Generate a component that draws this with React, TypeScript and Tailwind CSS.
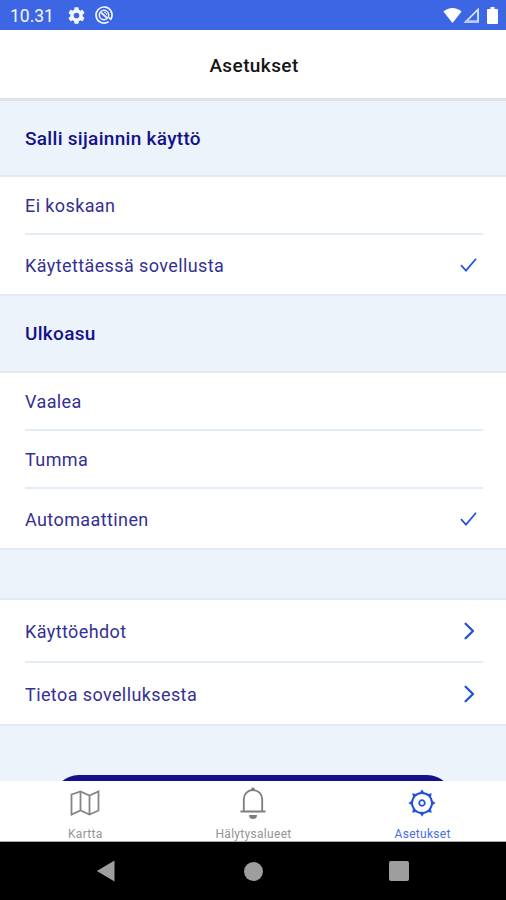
import React from "react";

function SectionTitle({ children, className }: { children: React.ReactNode; className: string }) {
  return (
    <h2 className={`flex shrink-0 items-center border-b-2 border-[#e3eaf3] bg-[#edf3fb] pl-[25px] text-[19px] font-medium tracking-[0.3px] text-[#14128a] ${className}`}>
      {children}
    </h2>
  );
}

function Row({ label, className, icon, last }: { label: string; className: string; icon?: "check" | "chevron"; last?: boolean }) {
  return (
    <div className={`ml-[25px] mr-[23px] flex shrink-0 items-center justify-between text-[18px] tracking-[0.4px] text-[#343093] ${last ? "" : "border-b-2 border-[#e3ebf4]"} ${className}`}>
      <span className="pt-px">{label}</span>
      {icon === "check" && (
        <svg className="mr-[6px] h-[16px] w-[17px]" viewBox="0 0 17 16" fill="none" stroke="#2352dc" strokeWidth="1.7">
          <path d="M1 8.2 6 13.6 16 1.7" />
        </svg>
      )}
      {icon === "chevron" && (
        <svg className="mr-[8px] h-[18px] w-[11px]" viewBox="0 0 11 18" fill="none" stroke="#2451d4" strokeWidth="2.3" strokeLinecap="round" strokeLinejoin="round">
          <path d="M1.6 1.7 9 9 1.6 16.3" />
        </svg>
      )}
    </div>
  );
}

const teeth = [0, 45, 90, 135, 180, 225, 270, 315];

export default function App() {
  return (
    <div className="flex h-[900px] w-[506px] flex-col overflow-hidden bg-white font-[Roboto,sans-serif]">
      <div className="flex h-[30px] shrink-0 items-center bg-[#3c66e4] pl-[10px] pr-[8px] text-[#f4f7ff]">
        <span className="w-[58px] pt-[2px] text-[17.5px]">10.31</span>
        <svg className="h-[17px] w-[17px]" viewBox="2 2 20 20" fill="currentColor">
          <path d="M19.14 12.94c.04-.3.06-.61.06-.94 0-.32-.02-.64-.07-.94l2.03-1.58a.49.49 0 0 0 .12-.61l-1.92-3.32a.488.488 0 0 0-.59-.22l-2.39.96c-.5-.38-1.03-.7-1.62-.94l-.36-2.54a.484.484 0 0 0-.48-.41h-3.84c-.24 0-.43.17-.47.41l-.36 2.54c-.59.24-1.13.57-1.62.94l-2.39-.96c-.22-.08-.47 0-.59.22L2.74 8.87c-.12.21-.08.47.12.61l2.03 1.58c-.05.3-.09.63-.09.94s.02.64.07.94l-2.03 1.58a.49.49 0 0 0-.12.61l1.92 3.32c.12.22.37.29.59.22l2.39-.96c.5.38 1.03.7 1.62.94l.36 2.54c.05.24.24.41.48.41h3.84c.24 0 .44-.17.47-.41l.36-2.54c.59-.24 1.13-.56 1.62-.94l2.39.96c.22.08.47 0 .59-.22l1.92-3.32c.12-.22.07-.47-.12-.61l-2.01-1.58zM12 15.3a3.3 3.3 0 1 1 0-6.6 3.3 3.3 0 0 1 0 6.6z" />
        </svg>
        <svg className="ml-[10px] h-[18px] w-[18px]" viewBox="0 0 18 18" fill="none" stroke="currentColor">
          <path d="M13.6 15.6A8 8 0 1 1 15.8 13.300L14 11.700" strokeWidth="1.700" />
          <circle cx="9" cy="9" r="4.700" strokeWidth="1.500" />
          <path d="M6 6.500 12 12" strokeWidth="1.700" />
          <path d="M9 6.200a2.700 2.700 0 0 1 2.700 2.700" strokeWidth="1" />
        </svg>
        <svg className="ml-auto h-[17px] w-[19px]" viewBox="0 0 19 17" fill="#fff">
          <path d="M.4 4.600C5.700-.3 13.300-.3 18.600 4.600L9.500 16z" />
        </svg>
        <svg className="ml-[1px] h-[17px] w-[17px]" viewBox="0 0 17 17" fill="none">
          <path d="M2.500 15 15 2.500V15z" stroke="#e4ebff" strokeWidth="1.700" />
          <path d="M2.500 14.500H15" stroke="#b7c8fa" strokeWidth="2.600" />
        </svg>
        <svg className="ml-[7px] h-[17px] w-[11px]" viewBox="0 0 11 17" fill="#fff">
          <path d="M3.500 0h4v2H10a1 1 0 0 1 1 1v13a1 1 0 0 1-1 1H1a1 1 0 0 1-1-1V3a1 1 0 0 1 1-1h2.500z" />
        </svg>
      </div>

      <header className="flex h-[71px] shrink-0 items-center justify-center border-b-[3px] border-[#dde3ea] pl-[2px] pt-[5px] text-[19px] font-medium tracking-[0.4px] text-[#151515]">
        Asetukset
      </header>

      <SectionTitle className="h-[76px] pt-[2px]">Salli sijainnin käyttö</SectionTitle>
      <Row label="Ei koskaan" className="h-[58px]" />
      <Row label="Käytettäessä sovellusta" className="h-[59px]" icon="check" last />

      <SectionTitle className="h-[79px] border-t-2 pt-[2px]">Ulkoasu</SectionTitle>
      <Row label="Vaalea" className="h-[58px]" />
      <Row label="Tumma" className="h-[58px]" />
      <Row label="Automaattinen" className="h-[59px]" icon="check" last />

      <div className="h-[52px] shrink-0 border-y-2 border-[#e3eaf3] bg-[#edf3fb]" />
      <Row label="Käyttöehdot" className="h-[63px]" icon="chevron" />
      <Row label="Tietoa sovelluksesta" className="h-[61px]" icon="chevron" last />

      <div className="flex h-[57px] shrink-0 justify-center overflow-hidden border-t-2 border-[#e3eaf3] bg-[#edf3fb] pt-[49px]">
        <button className="h-[56px] w-[400px] shrink-0 rounded-[26px] bg-[#12108a]" />
      </div>

      <nav className="grid h-[61px] shrink-0 grid-cols-3 border-b border-[#aaa] text-[12px] tracking-[0.3px] text-[#949494]">
        <div className="flex flex-col items-center pl-[2px] pt-[8px]">
          <svg className="h-[28px] w-[30px]" viewBox="0 0 30 28" fill="none" stroke="#858585" strokeWidth="1.800">
            <path d="M1.500 5.500 10.500 2.500 19.500 6.500 28.500 2.500V21.500L19.500 25.500 10.500 21.500 1.500 25.500zM10.500 2.500v19M19.500 6.500v19" />
          </svg>
          <span className="mt-[10px] leading-[14px]">Kartta</span>
        </div>
        <div className="flex flex-col items-center pt-[6px]">
          <svg className="h-[32px] w-[28px]" viewBox="0 0 28 32" fill="none" stroke="#7d7d7d" strokeWidth="1.800">
            <path d="M1.500 24.500h25M4.800 24.500V12.200a9.200 9.200 0 0 1 18.400 0v12.300" />
            <path d="M12 3.400V2.500a2 2 0 0 1 4 0v.9zM10 28h8a4 4 0 0 1-8 0z" fill="#7d7d7d" stroke="none" />
          </svg>
          <span className="mt-[8px] pl-px leading-[14px]">Hälytysalueet</span>
        </div>
        <div className="flex flex-col items-center pt-[7px] text-[#4a6ce2]">
          <svg className="h-[30px] w-[30px]" viewBox="-15 -15 30 30" fill="none" stroke="#2151da">
            <circle r="10" strokeWidth="1.900" />
            <circle r="2.800" strokeWidth="1.800" />
            {teeth.map((a) => (
              <path key={a} d="M-2-10.300 0-13.300 2-10.300z" transform={`rotate(${a})`} fill="#2151da" strokeWidth=".4" />
            ))}
          </svg>
          <span className="mt-[9px] pl-[2px] leading-[14px]">Asetukset</span>
        </div>
      </nav>

      <div className="flex h-[58px] shrink-0 items-center bg-black pl-[96px]">
        <svg className="h-[22px] w-[19px]" viewBox="0 0 19 22" fill="#9e9e9e"><path d="M.8 11 18.500.6v20.800z" /></svg>
        <div className="ml-[129px] h-[19px] w-[19px] rounded-full bg-[#9e9e9e]" />
        <div className="ml-[126px] h-[20px] w-[20px] rounded-[2px] bg-[#9e9e9e]" />
      </div>
    </div>
  );
}
